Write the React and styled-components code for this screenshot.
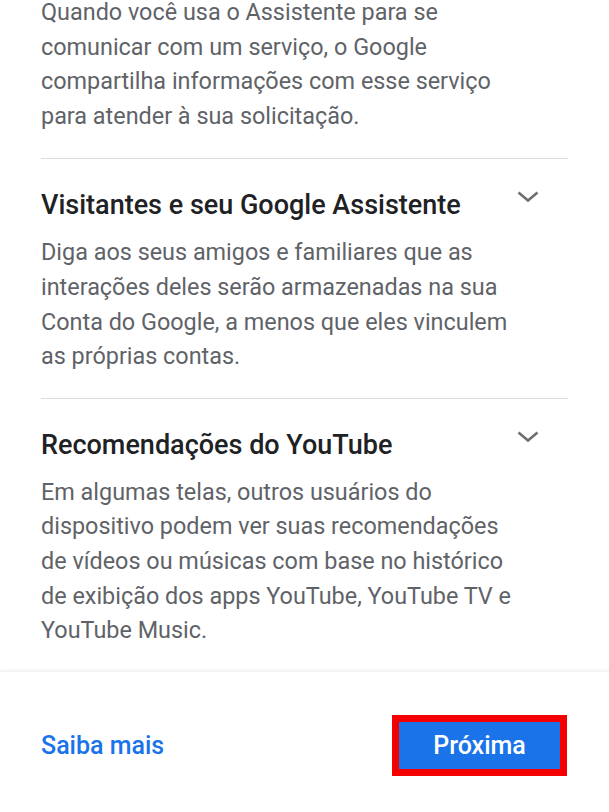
import React from 'react';
import styled, { createGlobalStyle } from 'styled-components';

const GlobalStyle = createGlobalStyle`
  html, body {
    margin: 0;
    padding: 0;
    background: #ffffff;
  }
  body {
    font-family: Roboto, "Noto Sans", Arial, sans-serif;
    -webkit-font-smoothing: antialiased;
  }
`;

const Screen = styled.div`
  width: 609px;
  height: 812px;
  display: flex;
  flex-direction: column;
  overflow: hidden;
  background: #fff;
`;

const ScrollArea = styled.div`
  flex: 1;
  overflow: hidden;
  padding: 0 41px;
`;

const Content = styled.div`
  margin-top: -5px;
`;

const Section = styled.section`
  padding: ${({ first }) => (first ? '0 0 25px' : '28px 0 24px')};
  border-bottom: ${({ last }) => (last ? 'none' : '1px solid #dadce0')};
`;

const SectionHead = styled.div`
  display: flex;
  align-items: flex-start;
  justify-content: space-between;
  margin-bottom: 12px;
`;

const Title = styled.h2`
  margin: 0;
  font-size: 27px;
  line-height: 36px;
  font-weight: 500;
  color: #202124;
`;

const Chevron = styled.svg`
  flex: none;
  width: 22px;
  height: 12px;
  margin: 4px 29px 0 0;
`;

const Body = styled.p`
  margin: 0;
  max-width: 483px;
  font-size: 23.4px;
  line-height: 34.6px;
  color: #5f6368;
`;

const Footer = styled.footer`
  flex: none;
  height: 141px;
  display: flex;
  align-items: center;
  justify-content: space-between;
  padding: 6px 41px 0 41px;
  box-shadow: 0 -1px 3px rgba(0, 0, 0, 0.06);
  border-top: 1px solid #f3f3f3;
  box-sizing: border-box;
`;

const TextLink = styled.a`
  font-size: 25px;
  font-weight: 500;
  color: #1a73e8;
  text-decoration: none;
`;

const PrimaryButton = styled.button`
  width: 175px;
  height: 61px;
  margin-right: 1px;
  border: 7px solid #f40000;
  background: #1a73e8;
  color: #fff;
  font-family: Roboto, "Noto Sans", Arial, sans-serif;
  font-size: 25px;
  font-weight: 500;
  padding: 0;
  cursor: pointer;
`;

const ExpandIcon = () => (
  <Chevron viewBox="0 0 22 12">
    <polyline points="1.5,1.5 11,9.5 20.5,1.5" fill="none" stroke="#6f6f6f" strokeWidth="2.6" />
  </Chevron>
);

const sections = [
  {
    title: 'Visitantes e seu Google Assistente',
    text: 'Diga aos seus amigos e familiares que as interações deles serão armazenadas na sua Conta do Google, a menos que eles vinculem as próprias contas.',
  },
  {
    title: 'Recomendações do YouTube',
    text: 'Em algumas telas, outros usuários do dispositivo podem ver suas recomendações de vídeos ou músicas com base no histórico de exibição dos apps YouTube, YouTube TV e YouTube Music.',
  },
];

const App = () => (
  <Screen>
    <GlobalStyle />
    <ScrollArea>
      <Content>
        <Section first>
          <Body>
            Quando você usa o Assistente para se comunicar com um serviço, o Google
            compartilha informações com esse serviço para atender à sua solicitação.
          </Body>
        </Section>
        {sections.map((s, i) => (
          <Section key={s.title} last={i === sections.length - 1}>
            <SectionHead>
              <Title>{s.title}</Title>
              <ExpandIcon />
            </SectionHead>
            <Body>{s.text}</Body>
          </Section>
        ))}
      </Content>
    </ScrollArea>
    <Footer>
      <TextLink href="#">Saiba mais</TextLink>
      <PrimaryButton>Próxima</PrimaryButton>
    </Footer>
  </Screen>
);

export default App;
